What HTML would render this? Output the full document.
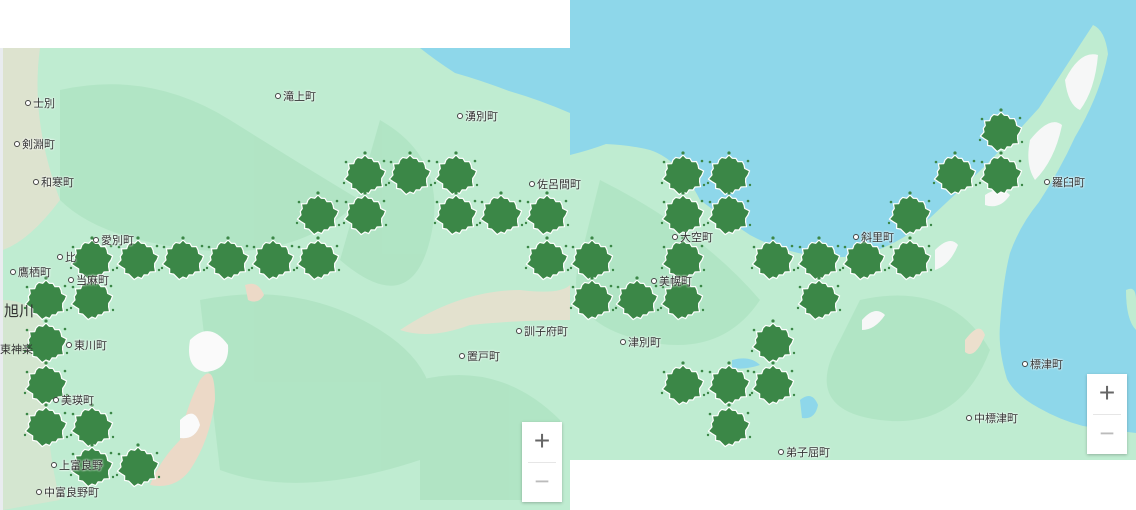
<!DOCTYPE html>
<html><head><meta charset="utf-8"><style>
html,body{margin:0;padding:0;width:1136px;height:510px;overflow:hidden;background:#fff;font-family:"Liberation Sans","Noto Sans CJK JP",sans-serif}
.lbl{position:absolute;font-size:11px;color:#333;white-space:nowrap;text-shadow:0 0 2px #fff,0 0 2px #fff;line-height:12px}
.lbl:before{content:"";display:inline-block;width:4px;height:4px;border:1px solid #444;border-radius:50%;background:#fff;margin-right:2px;vertical-align:1px}
.zc{position:absolute;width:40px;height:80px;background:#fff;box-shadow:0 1px 3px rgba(0,0,0,.25)}
.zc .p{position:absolute;left:0;top:0;width:40px;height:40px;font-size:28px;color:#666;text-align:center;line-height:38px}
.zc .m{position:absolute;left:0;top:40px;width:40px;height:40px;font-size:26px;color:#bbb;text-align:center;line-height:38px}
.zc .s{position:absolute;left:6px;top:40px;width:28px;height:1px;background:#e6e6e6}
</style></head><body>
<svg width="1136" height="510" style="position:absolute;left:0;top:0">
<rect x="0" y="48" width="3" height="462" fill="#e9ecef"/>
<rect x="3" y="48" width="567" height="462" fill="#bfecd1"/>
<g fill="#aee3c2" opacity=".8">
<path d="M60 90 Q150 70 230 120 T360 200 Q300 260 200 250 T60 200Z"/>
<path d="M200 300 Q300 280 380 330 T420 460 Q300 500 220 470Z"/>
<path d="M380 120 Q450 160 430 240 T340 260Z"/>
<path d="M420 380 Q500 360 560 420 L560 500 L420 500Z"/>
</g>
<path d="M3 48 L40 48 Q30 120 60 200 Q30 240 3 250Z" fill="#eadfcf" opacity=".7"/>
<path d="M3 300 Q40 300 50 340 Q40 420 60 500 L3 510Z" fill="#eadfcf" opacity=".5"/>
<path d="M420 48 L570 48 L570 113 Q540 100 509 91 Q480 80 455 73 Q435 60 420 48Z" fill="#8ed7ea"/>
<path d="M400 330 Q460 290 520 290 Q560 295 570 285 L570 320 Q520 320 470 325 Q430 340 400 330Z" fill="#ecdfcd" opacity=".8"/>
<path d="M200 380 Q215 360 215 400 Q210 440 190 470 Q175 490 150 485 Q160 460 180 440 Q185 410 200 380Z" fill="#ecd9c7"/>
<path d="M190 340 Q210 320 228 345 Q230 370 205 372 Q185 368 190 340Z" fill="#fafafa"/>
<path d="M180 420 Q195 405 200 425 Q195 440 180 438Z" fill="#fafafa"/>
<path d="M245 285 Q258 280 264 295 Q258 305 248 300Z" fill="#ecd9c7"/>
<rect x="3" y="0" width="567" height="48" fill="#fff"/>
<rect x="570" y="0" width="566" height="460" fill="#bfecd1"/>
<path d="M570 0 L1136 0 L1136 433 Q1110 430 1083 426 Q1060 420 1039 408 Q1015 395 1007 379 Q998 350 1000 325 Q1003 280 1010 253 Q1020 225 1039 202 Q1060 170 1075 137 Q1100 95 1108 54 Q1105 30 1093 25 Q1070 60 1039 108 Q1010 140 985 166 Q960 190 931 217 Q900 245 859 256 Q800 262 750 235 Q720 215 700 200 Q680 160 650 150 Q630 145 606 144 Q590 150 570 155Z" fill="#8ed7ea"/>
<path d="M1126 290 Q1136 285 1136 300 L1136 330 Q1126 320 1126 290Z" fill="#bfecd1"/>
<g fill="#aee3c2" opacity=".8">
<path d="M600 180 Q700 230 760 300 Q720 360 640 340 T580 260Z"/>
<path d="M860 300 Q950 280 990 350 Q960 430 880 420 T840 340Z"/>
</g>
<path d="M1065 80 Q1080 50 1098 55 Q1095 90 1080 110 Q1068 105 1065 80Z" fill="#f6f7f7"/>
<path d="M1030 140 Q1050 115 1062 125 Q1055 160 1035 180 Q1025 165 1030 140Z" fill="#f6f7f7"/>
<path d="M985 195 Q1000 185 1010 195 Q1000 210 985 205Z" fill="#f6f7f7"/>
<path d="M935 250 Q950 235 958 245 Q950 265 935 270Z" fill="#f6f7f7"/>
<path d="M862 320 Q875 305 885 315 Q875 330 862 330Z" fill="#f6f7f7"/>
<path d="M965 340 Q980 320 985 335 Q975 360 965 352Z" fill="#ecdfcd"/>
<path d="M732 360 Q750 355 760 365 Q745 370 732 368Z" fill="#8ed7ea"/>
<path d="M800 400 Q812 390 818 405 Q815 420 802 418Z" fill="#8ed7ea"/>
<rect x="572" y="460" width="564" height="50" fill="#fff"/>
<g id="mk"></g>
</svg>
<div class="lbl" style="left:25px;top:98px">士別</div>
<div class="lbl" style="left:14px;top:139px">剣淵町</div>
<div class="lbl" style="left:33px;top:177px">和寒町</div>
<div class="lbl" style="left:275px;top:91px">滝上町</div>
<div class="lbl" style="left:457px;top:111px">湧別町</div>
<div class="lbl" style="left:529px;top:179px">佐呂間町</div>
<div class="lbl" style="left:93px;top:235px">愛別町</div>
<div class="lbl" style="left:57px;top:252px">比</div>
<div class="lbl" style="left:10px;top:267px">鷹栖町</div>
<div class="lbl" style="left:68px;top:275px">当麻町</div>
<div style="position:absolute;left:4px;top:300px;font-size:15px;color:#333">旭川</div>
<div style="position:absolute;left:0;top:341px;font-size:11px;color:#333">東神楽</div>
<div class="lbl" style="left:66px;top:340px">東川町</div>
<div class="lbl" style="left:53px;top:395px">美瑛町</div>
<div class="lbl" style="left:51px;top:460px">上富良野</div>
<div class="lbl" style="left:36px;top:487px">中富良野町</div>
<div class="lbl" style="left:516px;top:326px">訓子府町</div>
<div class="lbl" style="left:459px;top:351px">置戸町</div>
<div class="lbl" style="left:620px;top:337px">津別町</div>
<div class="lbl" style="left:651px;top:276px">美幌町</div>
<div class="lbl" style="left:672px;top:232px">大空町</div>
<div class="lbl" style="left:853px;top:232px">斜里町</div>
<div class="lbl" style="left:1044px;top:177px">羅臼町</div>
<div class="lbl" style="left:1022px;top:359px">標津町</div>
<div class="lbl" style="left:966px;top:413px">中標津町</div>
<div class="lbl" style="left:778px;top:447px">弟子屈町</div>
<div class="zc" style="left:522px;top:422px"><div class="p">+</div><div class="s"></div><div class="m">−</div></div>
<div class="zc" style="left:1087px;top:374px"><div class="p">+</div><div class="s"></div><div class="m">−</div></div>
<script>
var R=[19,17,18,21,17,18,16,19,17,20,18,17,19,16,18,21,17,18,17,20,16,18,19,17,20,17,18,16,19,18,17,21];
var pts=[];
for(var i=0;i<R.length;i++){var a=i/R.length*Math.PI*2;var r=R[i];pts.push((Math.cos(a)*r).toFixed(1)+","+(Math.sin(a)*r).toFixed(1));}
var poly=pts.join(" ");
var C=[[365,175],[410,175],[456,175],[318,215],[365,215],[456,215],[501,215],[547,215],
[92,260],[138,260],[183,260],[228,260],[273,260],[318,260],[547,260],[592,260],
[46,300],[92,300],[592,300],[637,300],[682,300],[46,343],[46,385],[46,427],[92,427],[92,467],[138,467],
[1001,132],[683,175],[729,175],[955,175],[1001,175],[683,215],[729,215],[910,215],
[683,260],[773,260],[819,260],[864,260],[910,260],[819,300],[773,343],[683,385],[729,385],[773,385],[729,427]];
var h="";
C.forEach(function(c){h+='<g transform="translate('+c[0]+','+c[1]+')"><polygon points="'+poly+'" fill="#3b8747" stroke="#fff" stroke-width="1.2" stroke-linejoin="round"/><circle cx="0" cy="-22" r="1.6" fill="#3b8747"/><circle cx="-19" cy="-13" r="1.3" fill="#3b8747"/><circle cx="19" cy="-14" r="1.3" fill="#3b8747"/><circle cx="-21" cy="8" r="1.2" fill="#3b8747"/><circle cx="21" cy="10" r="1.2" fill="#3b8747"/></g>';});
document.getElementById("mk").innerHTML=h;
</script>
</body></html>
